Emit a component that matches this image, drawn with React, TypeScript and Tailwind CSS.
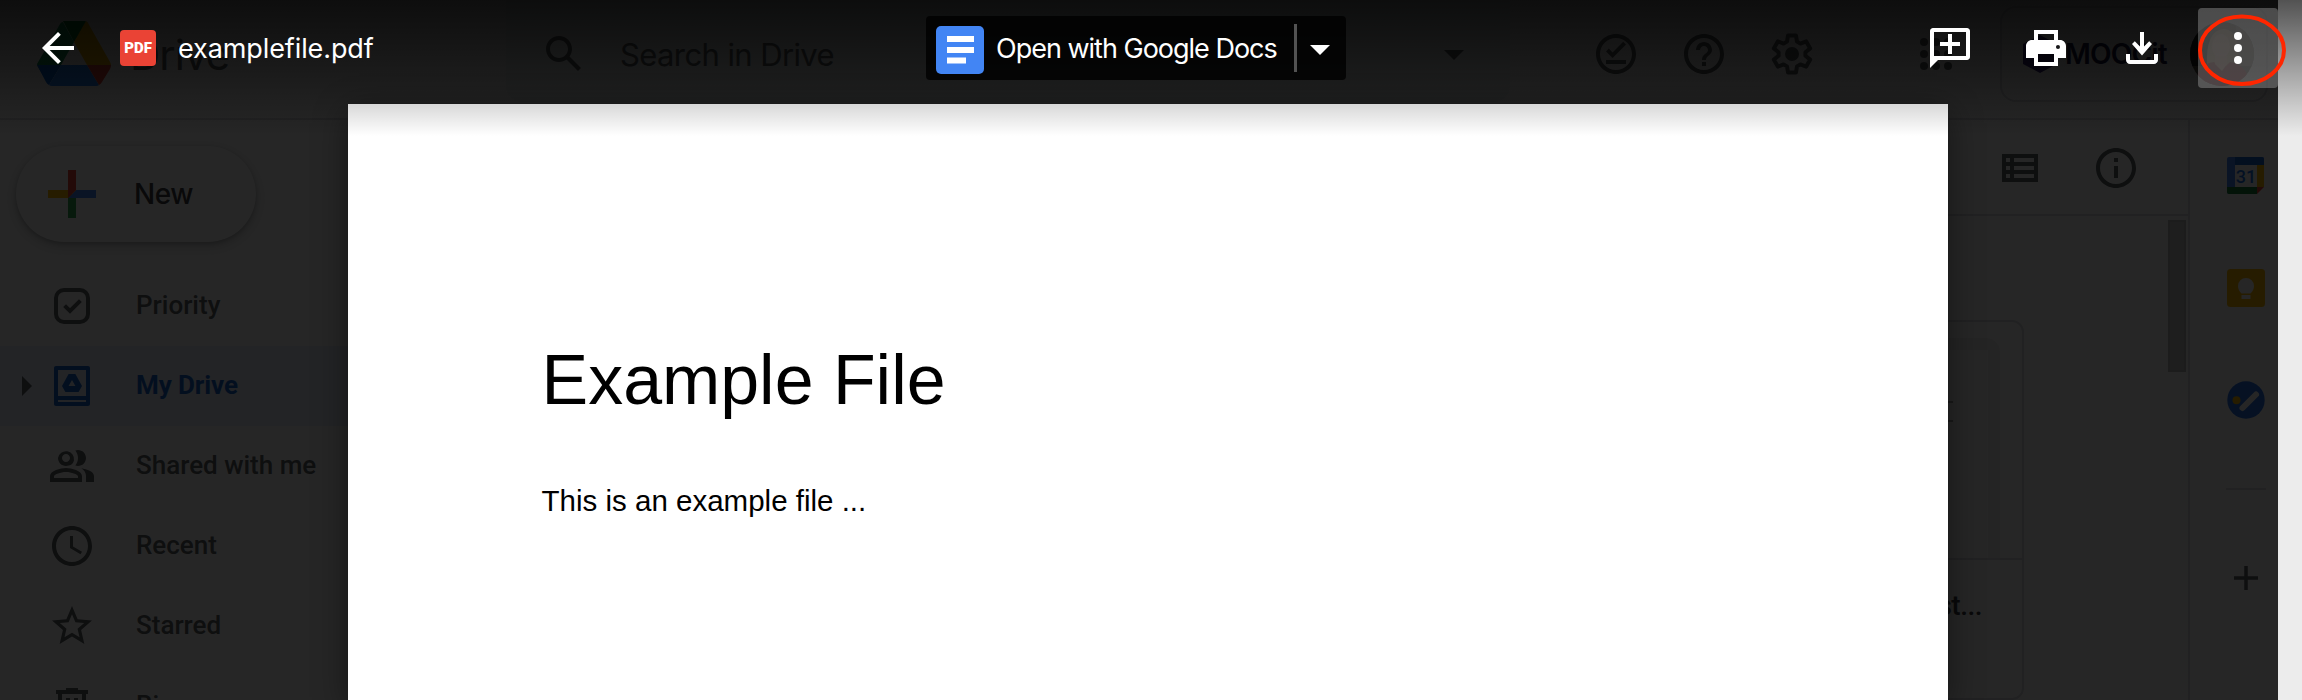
import React from "react";

type IconProps = { children: React.ReactNode; className?: string; box?: string };

function Icon({ children, className = "size-12", box = "0 0 24 24" }: IconProps) {
  return (
    <svg viewBox={box} className={`shrink-0 ${className}`} fill="currentColor">
      {children}
    </svg>
  );
}

function DriveLogo() {
  return (
    <svg viewBox="0 0 74 65" className="h-[65px] w-[74px] shrink-0">
      <path d="M26 1 L37 21 L24 44 L12 62 Q10 61 9 59 L1 46 Q0 44 0 43 L23 3 Q24 1 26 1Z" fill="#0f9d58" />
      <path d="M26 0 H48 Q50 1 51 2 L37 21Z" fill="#00832d" />
      <path d="M51 2 L73 41 Q74 43 74 44 H50 L37 21 L49 0Z" fill="#ffba00" />
      <path d="M0 44 H24 L12 64 Q10 63 9 61Z" fill="#0066da" />
      <path d="M24 44 H50 L62 64 Q61 65 59 65 H15 Q13 65 12 64Z" fill="#2684fc" />
      <path d="M50 44 H74 Q74 46 73 48 L65 61 Q64 63 62 64Z" fill="#ea4335" />
    </svg>
  );
}

function DriveHeader() {
  return (
    <header className="flex h-[120px] shrink-0 items-start border-b-2 border-[#dadce0] text-[#5f6368]">
      <div className="flex w-[506px] items-center pl-[37px] pt-[21px]">
        <DriveLogo />
        <span className="pl-[19px] pt-[2px] font-['Inter'] text-[42px] leading-[56px] tracking-[-1px]">Drive</span>
      </div>
      <div className="flex h-[102px] w-[1004px] items-start rounded-b-2xl bg-[#f1f3f4] pl-[34px] pr-8 pt-[30px]">
        <Icon>
          <path d="M20.49 19l-5.73-5.73C15.53 12.2 16 10.91 16 9.5 16 5.91 13.09 3 9.5 3S3 5.91 3 9.5 5.91 16 9.5 16c1.41 0 2.7-.47 3.77-1.24L19 20.49 20.49 19zM5 9.5C5 7.01 7.01 5 9.5 5S14 7.01 14 9.5 11.99 14 9.5 14 5 11.99 5 9.5z" />
        </Icon>
        <span className="flex-1 pl-8 font-['Inter'] text-[31px] leading-[50px] tracking-[-0.600px]">Search in Drive</span>
        <Icon><path d="M7 10l5 5 5-5z" /></Icon>
      </div>
      <div className="flex gap-10 pl-[82px] pt-[30px]">
        <Icon>
          <path d="M12 2C6.5 2 2 6.5 2 12s4.5 10 10 10 10-4.500 10-10S17.500 2 12 2zm0 18c-4.400 0-8-3.600-8-8s3.600-8 8-8 8 3.600 8 8-3.600 8-8 8zM7 15h10v2H7zM10.300 14L7 10.700l1.400-1.400 1.900 1.900 5.300-5.300L17 7.300z" />
        </Icon>
        <Icon>
          <path d="M11 18h2v-2h-2v2zm1-16C6.480 2 2 6.480 2 12s4.480 10 10 10 10-4.480 10-10S17.520 2 12 2zm0 18c-4.410 0-8-3.590-8-8s3.590-8 8-8 8 3.590 8 8-3.590 8-8 8zm0-14c-2.210 0-4 1.790-4 4h2c0-1.100.9-2 2-2s2 .9 2 2c0 2-3 1.750-3 5h2c0-2.250 3-2.500 3-5 0-2.210-1.790-4-4-4z" />
        </Icon>
        <Icon>
          <path d="M10 2.800h4l.5 3 1.700 1 2.900-1.100 2 3.500-2.400 1.900v1.800l2.400 1.900-2 3.500-2.900-1.100-1.700 1-.5 3h-4l-.5-3-1.700-1-2.900 1.100-2-3.500 2.400-1.900v-1.800L2.900 9.200l2-3.500 2.900 1.100 1.700-1z" fill="none" stroke="currentColor" strokeWidth="2" strokeLinejoin="round" />
          <circle cx="12" cy="12" r="3.500" />
        </Icon>
      </div>
      <div className="pl-24 pt-[30px]">
        <Icon>
          {[6, 12, 18].map((y) => [6, 12, 18].map((x) => <circle key={`${x}-${y}`} cx={x} cy={y} r="2" />))}
        </Icon>
      </div>
      <div className="ml-10 mt-1.5 flex h-24 w-[268px] items-center rounded-2xl border-2 border-[#dadce0] pl-[21px]">
        <Icon box="0 0 34 38" className="h-[38px] w-[34px] text-[#30207a]">
          <path d="M17 0l17 9v20l-17 9-17-9V9z" />
        </Icon>
        <span className="w-[127px] pl-2 font-['Inter'] text-[28px] font-semibold leading-[40px] tracking-[-0.800px] text-[#1a1446]">MOOCit</span>
        <svg viewBox="0 0 64 64" className="ml-1.5 size-16 shrink-0">
          <defs>
            <clipPath id="avatar"><circle cx="32" cy="32" r="32" /></clipPath>
          </defs>
          <g clipPath="url(#avatar)">
            <rect width="64" height="64" fill="#5c5a4c" />
            <path d="M0 0h20v44H0z" fill="#1c2220" />
            <path d="M46 0h18v44H46z" fill="#8a8074" />
            <path d="M17 46Q15 8 34 7q17 1 14 36z" fill="#c9a878" />
            <ellipse cx="31" cy="24" rx="9" ry="12" fill="#e7b9a0" />
            <path d="M4 64Q7 42 24 40l8 8 8-8q17 2 21 24z" fill="#a5303c" />
            <path d="M25 34h12v8l-5 7-7-7z" fill="#e2b094" />
          </g>
        </svg>
      </div>
    </header>
  );
}

const navItems = [
  {
    label: "Priority",
    icon: (
      <>
        <rect x="4" y="4" width="16" height="16" rx="4" fill="none" stroke="currentColor" strokeWidth="2" />
        <path d="M8.300 11.800l2.700 2.700 5.200-5.200" fill="none" stroke="currentColor" strokeWidth="2" />
      </>
    ),
  },
  {
    label: "My Drive",
    active: true,
    icon: (
      <>
        <path fillRule="evenodd" d="M4 2h16c.6 0 1 .4 1 1v18c0 .6-.4 1-1 1H4c-.6 0-1-.4-1-1V3c0-.6.4-1 1-1zm1 2v13h14V4zm0 15v1h14v-1z" />
        <path fillRule="evenodd" d="M10.300 6h3.400L17 12l-1.700 3H8.700L7 12zM12 9l-1.700 3h3.400z" />
      </>
    ),
  },
  {
    label: "Shared with me",
    icon: (
      <path d="M9 12c1.930 0 3.500-.8 3.980-2.700A4 4 0 1 0 5 8c0 2.210 1.790 4 4 4zM9 6c1.100 0 2 .9 2 2s-.9 2-2 2-2-.9-2-2 .9-2 2-2zM9 13c-2.670 0-8 1.340-8 4v3h16v-3c0-2.660-5.330-4-8-4zm6 5H3v-.990C3.200 16.290 6.300 15 9 15s5.800 1.290 6 2v1zM15 12c2.210 0 4-1.790 4-4s-1.790-4-4-4c-.47 0-.91.1-1.330.24C14.500 5.270 15 6.580 15 8s-.5 2.730-1.330 3.760c.42.14.86.24 1.330.24zM16.670 13.130C18.040 14.060 19 15.320 19 17v3h4v-3c0-2.180-3.580-3.470-6.330-3.870z" />
    ),
  },
  {
    label: "Recent",
    icon: (
      <path d="M11.990 2C6.470 2 2 6.480 2 12s4.470 10 9.990 10C17.520 22 22 17.520 22 12S17.520 2 11.990 2zM12 20c-4.420 0-8-3.580-8-8s3.580-8 8-8 8 3.580 8 8-3.580 8-8 8zm.5-13H11v6l5.250 3.150.75-1.230-4.500-2.670z" />
    ),
  },
  {
    label: "Starred",
    icon: (
      <path d="M22 9.240l-7.190-.62L12 2 9.190 8.630 2 9.240l5.460 4.730L5.820 21 12 17.270 18.180 21l-1.630-7.030L22 9.240zM12 15.400l-3.760 2.270 1-4.280-3.320-2.880 4.380-.38L12 6.100l1.710 4.040 4.380.38-3.320 2.880 1 4.280L12 15.400z" />
    ),
  },
  {
    label: "Bin",
    icon: (
      <path d="M15 4V3H9v1H4v2h1v13c0 1.100.9 2 2 2h10c1.100 0 2-.9 2-2V6h1V4h-5zm2 15H7V6h10v13zM9 8h2v9H9zm4 0h2v9h-2z" />
    ),
  },
];

function Sidebar() {
  return (
    <nav className="w-[348px] shrink-0 pt-[26px]">
      <div className="ml-4 flex h-24 w-60 items-center rounded-full pl-5 shadow-[0_2px_4px_rgba(60,64,67,0.300),0_4px_12px_4px_rgba(60,64,67,0.150)]">
        <svg viewBox="0 0 36 36" className="size-[72px] shrink-0">
          <path fill="#34a853" d="M16 16v14h4V20z" />
          <path fill="#4285f4" d="M30 16H20l-4 4h14z" />
          <path fill="#fbbc05" d="M6 16v4h10l4-4z" />
          <path fill="#ea4335" d="M20 16V6h-4v14z" />
        </svg>
        <span className="pl-[26px] font-['Inter'] text-[28px] font-medium tracking-[-0.500px] text-[#3c4043]">New</span>
      </div>
      <ul className="pt-6">
        {navItems.map((item) => (
          <li
            key={item.label}
            className={`flex h-20 items-center ${item.active ? "bg-[#e8f0fe] text-[#1967d2]" : "text-[#5f6368]"}`}
          >
            <span className="flex w-12 shrink-0 justify-end pr-4">
              {item.active && (
                <Icon box="0 0 10 20" className="h-5 w-2.5 text-[#5f6368]"><path d="M0 0l10 10L0 20z" /></Icon>
              )}
            </span>
            <Icon>{item.icon}</Icon>
            <span className={`pb-0.5 pl-10 font-['Roboto'] text-[26px] ${item.active ? "font-bold tracking-[-0.100px]" : "font-medium"}`}>{item.label}</span>
          </li>
        ))}
      </ul>
    </nav>
  );
}

function FileArea() {
  return (
    <section className="flex flex-1 flex-col">
      <div className="flex h-24 shrink-0 items-center justify-end gap-12 border-b-2 border-[#dadce0] pr-12 pt-0.5 text-[#5f6368]">
        <Icon>
          <path fillRule="evenodd" d="M3 5h18v14H3zM5 7v2h2V7zM9 7v2h10V7zM5 11v2h2v-2zM9 11v2h10v-2zM5 15v2h2v-2zM9 15v2h10v-2z" />
        </Icon>
        <Icon>
          <path d="M11 7h2v2h-2zm0 4h2v6h-2zm1-9C6.480 2 2 6.480 2 12s4.480 10 10 10 10-4.480 10-10S17.520 2 12 2zm0 18c-4.410 0-8-3.590-8-8s3.590-8 8-8 8 3.590 8 8-3.590 8-8 8z" />
        </Icon>
      </div>
      <div className="flex justify-end pr-0.5 pt-1">
        <div className="mr-36 mt-[100px] flex h-[380px] w-[424px] flex-col rounded-xl border-2 border-[#dadce0]">
          <div className="flex h-[238px] shrink-0 flex-col border-b-2 border-[#dadce0] pr-[22px] pt-4">
            <div className="flex-1 rounded-tr-[14px] bg-[#f1f1f1] pr-3 pt-3">
              <div className="flex h-full flex-col items-end gap-[17px] bg-white pr-[35px] pt-[51px]">
                <span className="h-0.5 w-8 bg-[#aaa]" />
                <span className="h-0.5 w-8 bg-[#aaa]" />
              </div>
            </div>
          </div>
          <span className="pr-[40px] pt-[30px] text-right font-['Roboto'] text-[28px] font-medium leading-[32px] tracking-[-0.500px] text-[#3c4043]">st...</span>
        </div>
        <div className="h-[152px] w-[18px] border-2 border-[#bdbdbd] bg-[#c8c8c8]" />
      </div>
    </section>
  );
}

function SidePanel() {
  return (
    <aside className="flex w-[90px] flex-col items-center border-l-2 border-[#dadce0] pl-6 pr-0">
      <svg viewBox="0 0 38 38" className="mt-[37px] size-[38px]">
        <path d="M2 0h33q2 0 2 2v6H8v29H2q-2 0-2-2V2Q0 0 2 0z" fill="#4285f4" />
        <path d="M8 0h27q2 0 2 2v6H8z" fill="#1967d2" />
        <path d="M30 8h7v22h-7z" fill="#fbbc04" />
        <path d="M0 30h30v7H2q-2 0-2-2z" fill="#188038" />
        <path d="M30 30h7l-7 7z" fill="#ea4335" />
        <path d="M8 8h22v22H8z" fill="#fff" />
        <text x="19" y="25.500" textAnchor="middle" fontFamily="Roboto" fontSize="18" fontWeight="500" fill="#1a73e8">31</text>
      </svg>
      <svg viewBox="0 0 38 38" className="mt-[74px] size-[38px]">
        <rect width="38" height="38" rx="3.500" fill="#fbbc04" />
        <path d="M19 9a8 8 0 0 1 8 8q0 4-3.500 7.500h-9Q11 21 11 17a8 8 0 0 1 8-8zM14.500 26h9v4h-9z" fill="#fff" />
      </svg>
      <svg viewBox="0 0 38 38" className="mt-[74px] size-[38px]">
        <circle cx="19" cy="19" r="18.700" fill="#2a73e8" />
        <path d="M15.500 27L29 13.500" stroke="#fff" strokeWidth="6" strokeLinecap="round" />
        <circle cx="9.500" cy="19.300" r="4" fill="#fbbc04" />
      </svg>
      <div className="mt-[69px] h-0.5 w-10 bg-[#dadce0]" />
      <svg viewBox="0 0 24 24" className="mt-[76px] size-6 text-[#5f6368]">
        <path d="M12 0v24M0 12h24" stroke="currentColor" strokeWidth="3.500" />
      </svg>
    </aside>
  );
}

function DrivePage() {
  return (
    <div className="flex h-[700px] w-[2278px] flex-col overflow-hidden bg-white">
      <DriveHeader />
      <div className="flex flex-1">
        <Sidebar />
        <FileArea />
        <SidePanel />
      </div>
    </div>
  );
}

function DocumentPage() {
  return (
    <article className="ml-[348px] mt-[104px] h-[596px] w-[1600px] bg-white pl-[193.600px] font-['Liberation_Sans'] text-black shadow-[0_8px_32px_rgba(0,0,0,0.450)]">
      <h1 className="pt-[236px] text-[69.900px] leading-[80px]">Example File</h1>
      <p className="pt-[64px] text-[29.500px] leading-[34px]">This is an example file ...</p>
    </article>
  );
}

function Toolbar() {
  return (
    <div className="flex h-24 w-[2278px] items-start text-white">
      <div className="flex w-[926px] items-center pl-[34px] pt-6">
        <Icon><path d="M20 11H7.830l5.590-5.590L12 4l-8 8 8 8 1.410-1.410L7.830 13H20v-2z" /></Icon>
        <div className="ml-[38px] flex h-9 w-9 items-center justify-center rounded bg-[#ea4335]">
          <span className="font-['Roboto'] text-[15px] font-black leading-none">PDF</span>
        </div>
        <span className="pl-[22px] pt-0.5 font-['Inter'] text-[27px] leading-[46px] tracking-[-0.100px]">examplefile.pdf</span>
      </div>
      <div className="mt-4 flex h-16 w-[420px] items-center rounded bg-black/80 pl-2.5">
        <svg viewBox="0 0 48 48" className="mt-1 size-12 shrink-0">
          <rect width="48" height="48" rx="5" fill="#4285f4" />
          <path d="M11 10h27v6H11zM11 21h27v6H11zM11 31.500h19v6H11z" fill="#fff" />
        </svg>
        <span className="w-[310px] pl-3 pt-0.5 font-['Inter'] text-[27px] leading-[46px] tracking-[-1px]">Open with Google Docs</span>
        <span className="h-12 w-[3px] bg-[#525252]" />
        <Icon className="ml-[-1px] mt-0.5 size-12"><path d="M7 10l5 5 5-5z" /></Icon>
      </div>
      <div className="flex flex-1 justify-end gap-4 pt-2">
        <button className="flex size-20 items-center justify-center">
          <Icon>
            <path d="M3.500 3h17c.8 0 1.500.7 1.500 1.500v13c0 .8-.7 1.500-1.500 1.500H6l-4 4V4.500C2 3.700 2.700 3 3.500 3zM4 5V17h16V5z" fillRule="evenodd" transform="translate(0 -1)" />
            <path d="M11 5h2v4h4v2h-4v4h-2v-4H7V9h4z" />
          </Icon>
        </button>
        <button className="flex size-20 items-center justify-center">
          <Icon>
            <path fillRule="evenodd" d="M18 8V3H6v5H5c-1.660 0-3 1.340-3 3v6h4v4h12v-4h4v-6c0-1.660-1.340-3-3-3zM8 5h8v3H8zM16 19H8v-4h8zM18 10.500a1 1 0 1 1 0 2 1 1 0 0 1 0-2z" />
          </Icon>
        </button>
        <button className="flex size-20 items-center justify-center">
          <Icon>
            <path d="M11 4h2v7.200l2.600-2.600L17 10l-5 5.800L7 10l1.400-1.400 2.600 2.600zM4 15h2v3h12v-3h2v3c0 1.100-.9 2-2 2H6c-1.100 0-2-.9-2-2z" />
          </Icon>
        </button>
        <button className="relative flex size-20 items-center justify-center rounded bg-white/25">
          <Icon>
            {[6, 12, 18].map((y) => <circle key={y} cx="12" cy={y} r="2" />)}
          </Icon>
          <svg viewBox="0 0 88 72" className="absolute left-0 top-1.5 h-[72px] w-[88px]">
            <ellipse cx="44" cy="36.300" rx="42" ry="33.700" fill="none" stroke="#ff2600" strokeWidth="4" />
          </svg>
        </button>
      </div>
    </div>
  );
}

export default function App() {
  return (
    <main className="grid h-[700px] w-[2302px] overflow-hidden bg-[#ececec] *:col-start-1 *:row-start-1">
      <DrivePage />
      <div className="h-[700px] w-[2278px] bg-black/85" />
      <DocumentPage />
      <div className="h-[136px] w-full bg-linear-to-b from-black/65 to-transparent" />
      <Toolbar />
    </main>
  );
}
